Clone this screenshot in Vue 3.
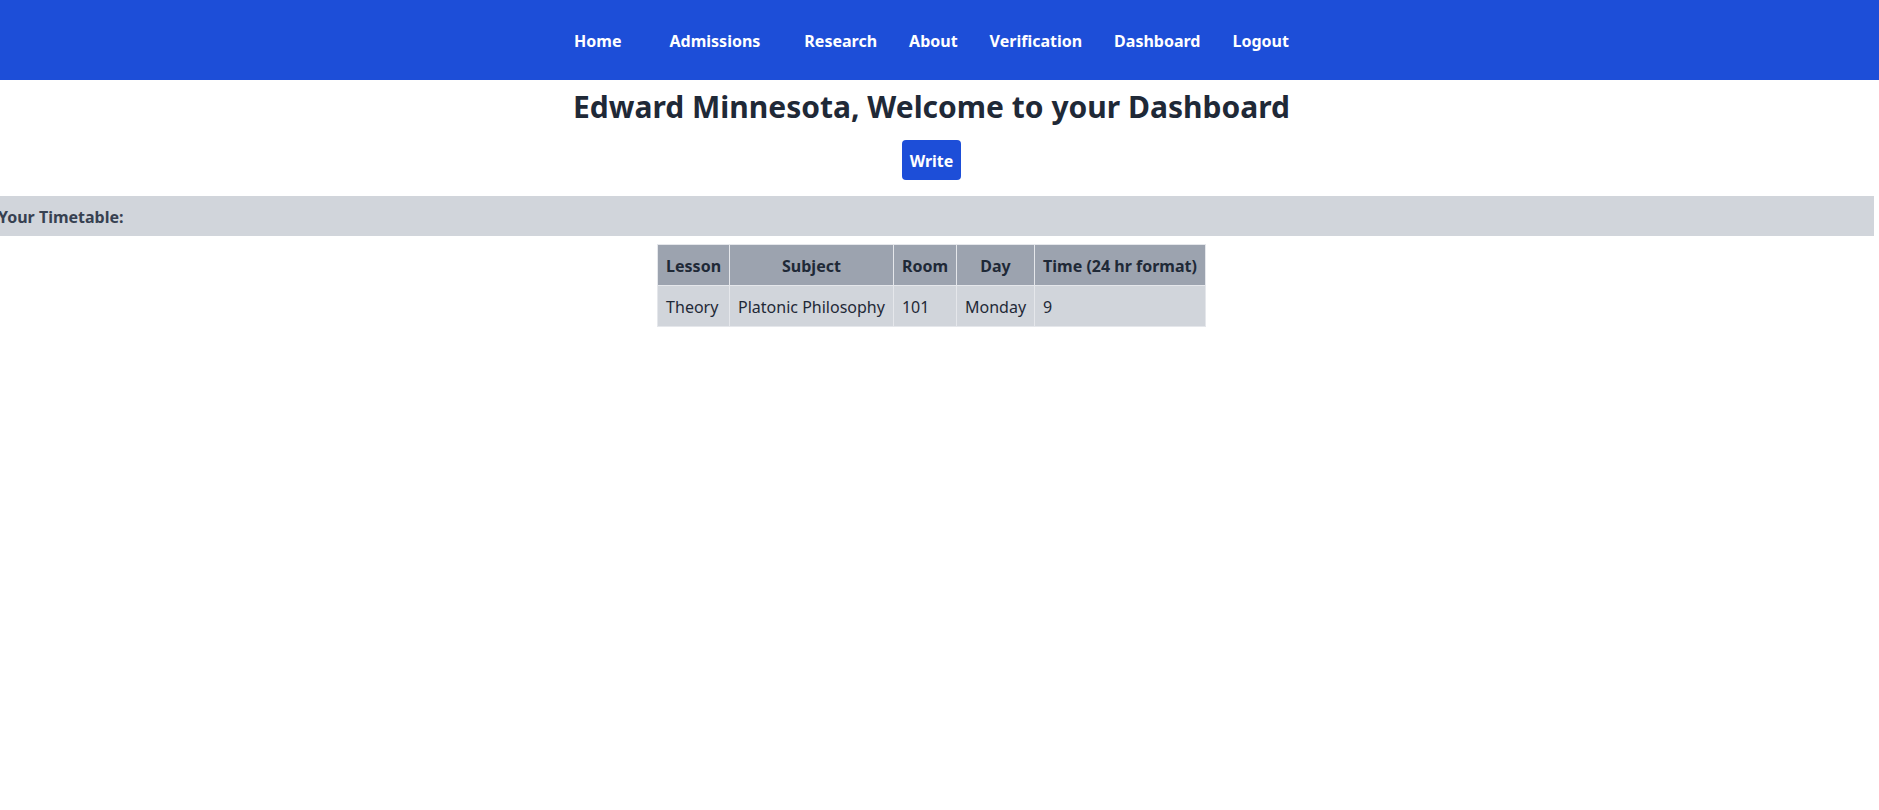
<script setup>
const links = [
  { label: 'Home', cls: 'wide' },
  { label: 'Admissions', cls: 'mid' },
  { label: 'Research' },
  { label: 'About' },
  { label: 'Verification' },
  { label: 'Dashboard' },
  { label: 'Logout' },
]
const columns = ['Lesson', 'Subject', 'Room', 'Day', 'Time (24 hr format)']
const rows = [['Theory', 'Platonic Philosophy', '101', 'Monday', '9']]
</script>

<template>
  <div class="page">
    <nav class="nav">
      <a v-for="l in links" :key="l.label" href="#" :class="l.cls">{{ l.label }}</a>
    </nav>
    <main>
      <h1>Edward Minnesota, Welcome to your Dashboard</h1>
      <button type="button" class="write">Write</button>
      <h2>Your Timetable:</h2>
      <table>
        <thead>
          <tr><th v-for="c in columns" :key="c" scope="col">{{ c }}</th></tr>
        </thead>
        <tbody>
          <tr v-for="(r, i) in rows" :key="i">
            <td v-for="(v, j) in r" :key="j">{{ v }}</td>
          </tr>
        </tbody>
      </table>
    </main>
  </div>
</template>

<style>
body {
  margin: 0;
  background: #fff;
}
</style>

<style scoped>
.page {
  overflow-x: hidden;
  font-family: "Noto Sans", sans-serif;
  font-size: 16px;
  line-height: 24px;
  color: #1f2937;
}
.nav {
  display: flex;
  justify-content: center;
  align-items: center;
  padding: 29px 16px 27px 0;
  background: #1d4ed8;
}
.nav a {
  margin: 0 16px;
  color: #fff;
  font-weight: 700;
  text-decoration: none;
}
.nav a.wide {
  margin-right: 32px;
}
.nav a.mid {
  margin-right: 28px;
}
main {
  display: flex;
  flex-direction: column;
  align-items: center;
  padding-right: 16px;
}
h1 {
  margin: 8px 0 0;
  font-size: 30px;
  line-height: 38px;
  font-weight: 700;
}
.write {
  margin: 14px 0 16px;
  padding: 9px 8px 7px;
  border: 0;
  border-radius: 4px;
  background: #1d4ed8;
  color: #fff;
  font: inherit;
  font-weight: 700;
}
h2 {
  align-self: stretch;
  margin: 0 -11px 8px 0;
  padding: 9px 0 7px;
  background: #d1d5db;
  color: #374151;
  font-size: 16px;
  line-height: 24px;
  font-weight: 700;
  text-indent: -2px;
}
table {
  border-collapse: collapse;
}
th,
td {
  padding: 9px 8px 7px;
  border: 1px solid #e5e7eb;
}
th {
  background: #9ca3af;
  font-weight: 700;
  text-align: center;
}
td {
  background: #d1d5db;
  text-align: left;
}
</style>
